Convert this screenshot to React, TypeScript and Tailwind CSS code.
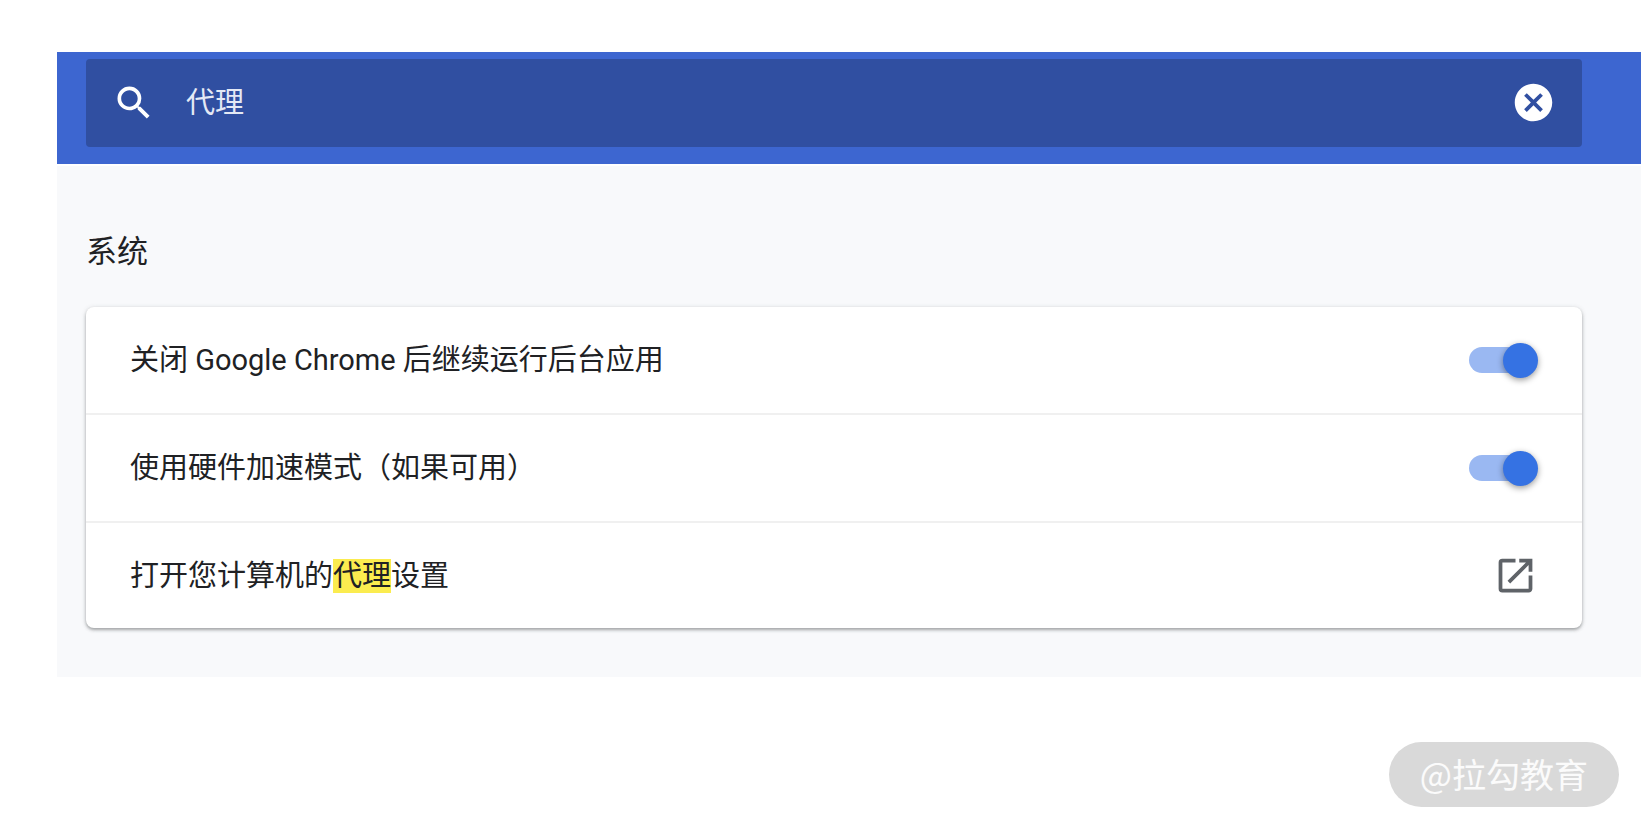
import { useState } from "react";
import { MdCancel, MdOpenInNew, MdSearch } from "react-icons/md";

const toggleItems = [
  { id: "background-apps", label: "关闭 Google Chrome 后继续运行后台应用" },
  { id: "hardware-acceleration", label: "使用硬件加速模式（如果可用）" },
];

function Toggle({ id }: { id: string }) {
  const [checked, setChecked] = useState(true);

  return (
    <input
      id={id}
      type="checkbox"
      role="switch"
      checked={checked}
      onChange={(e) => setChecked(e.target.checked)}
      className="relative flex h-9 w-[69px] shrink-0 cursor-pointer appearance-none items-center before:h-[26px] before:w-[60px] before:rounded-full before:bg-[#bdc1c6] after:absolute after:left-0 after:size-[35px] after:rounded-full after:bg-white after:shadow-[0_2px_6px_rgba(0,0,0,0.4)] checked:before:bg-[#9ab8f2] checked:after:left-[34px] checked:after:bg-[#3572e3]"
    />
  );
}

function SearchHeader() {
  const [query, setQuery] = useState("代理");

  return (
    <header className="border-b-2 border-white bg-[#3d66d0] pt-[7px] pr-[59px] pb-[17px] pl-[29px]">
      <div className="flex h-[88px] items-center rounded bg-[#304fa1] px-[26px] pb-px text-white">
        <label htmlFor="search" aria-label="搜索设置">
          <MdSearch className="size-11" />
        </label>
        <input
          id="search"
          type="text"
          value={query}
          onChange={(e) => setQuery(e.target.value)}
          className="ml-[30px] min-w-0 flex-1 bg-transparent text-[29px] leading-10 text-[#e4e9f5] outline-none"
        />
        <button type="button" aria-label="清除搜索内容" onClick={() => setQuery("")}>
          <MdCancel className="size-[45px]" />
        </button>
      </div>
    </header>
  );
}

export default function App() {
  return (
    <div
      lang="zh-CN"
      className="flex min-h-screen flex-col bg-white pt-[52px] font-[Roboto,'Noto_Sans_CJK_SC',sans-serif] text-[#202124]"
    >
      <div className="ml-[57px] bg-[#f8f9fb]">
        <SearchHeader />

        <main className="pt-16 pr-[59px] pb-[49px] pl-[29px]">
          <h2 className="mb-[33px] text-[31px] leading-[44px]">系统</h2>

          <div className="divide-y-2 divide-[#f0f0f0] rounded-lg bg-white text-[29px] leading-10 shadow-[0_2px_3px_rgba(60,64,67,0.35),0_1px_5px_rgba(60,64,67,0.2)]">
            {toggleItems.map((item) => (
              <div key={item.id} className="flex items-center justify-between px-11 py-[33px]">
                <label htmlFor={item.id}>{item.label}</label>
                <Toggle id={item.id} />
              </div>
            ))}
            <a href="#proxy" className="flex items-center justify-between px-11 py-[30px]">
              <span>
                打开您计算机的<mark className="bg-[#fbec4f] text-inherit">代理</mark>设置
              </span>
              <MdOpenInNew className="size-[45px] text-[#5f6368]" />
            </a>
          </div>
        </main>
      </div>

      {/* Watermark */}
      <footer className="mt-auto mr-[22px] mb-[21px] self-end rounded-full bg-[#d9d9d9] px-[31px] pt-[7px] pb-[9px] font-['Noto_Sans_CJK_SC',sans-serif] text-[34px] leading-[49px] text-white/90">
        @拉勾教育
      </footer>
    </div>
  );
}
